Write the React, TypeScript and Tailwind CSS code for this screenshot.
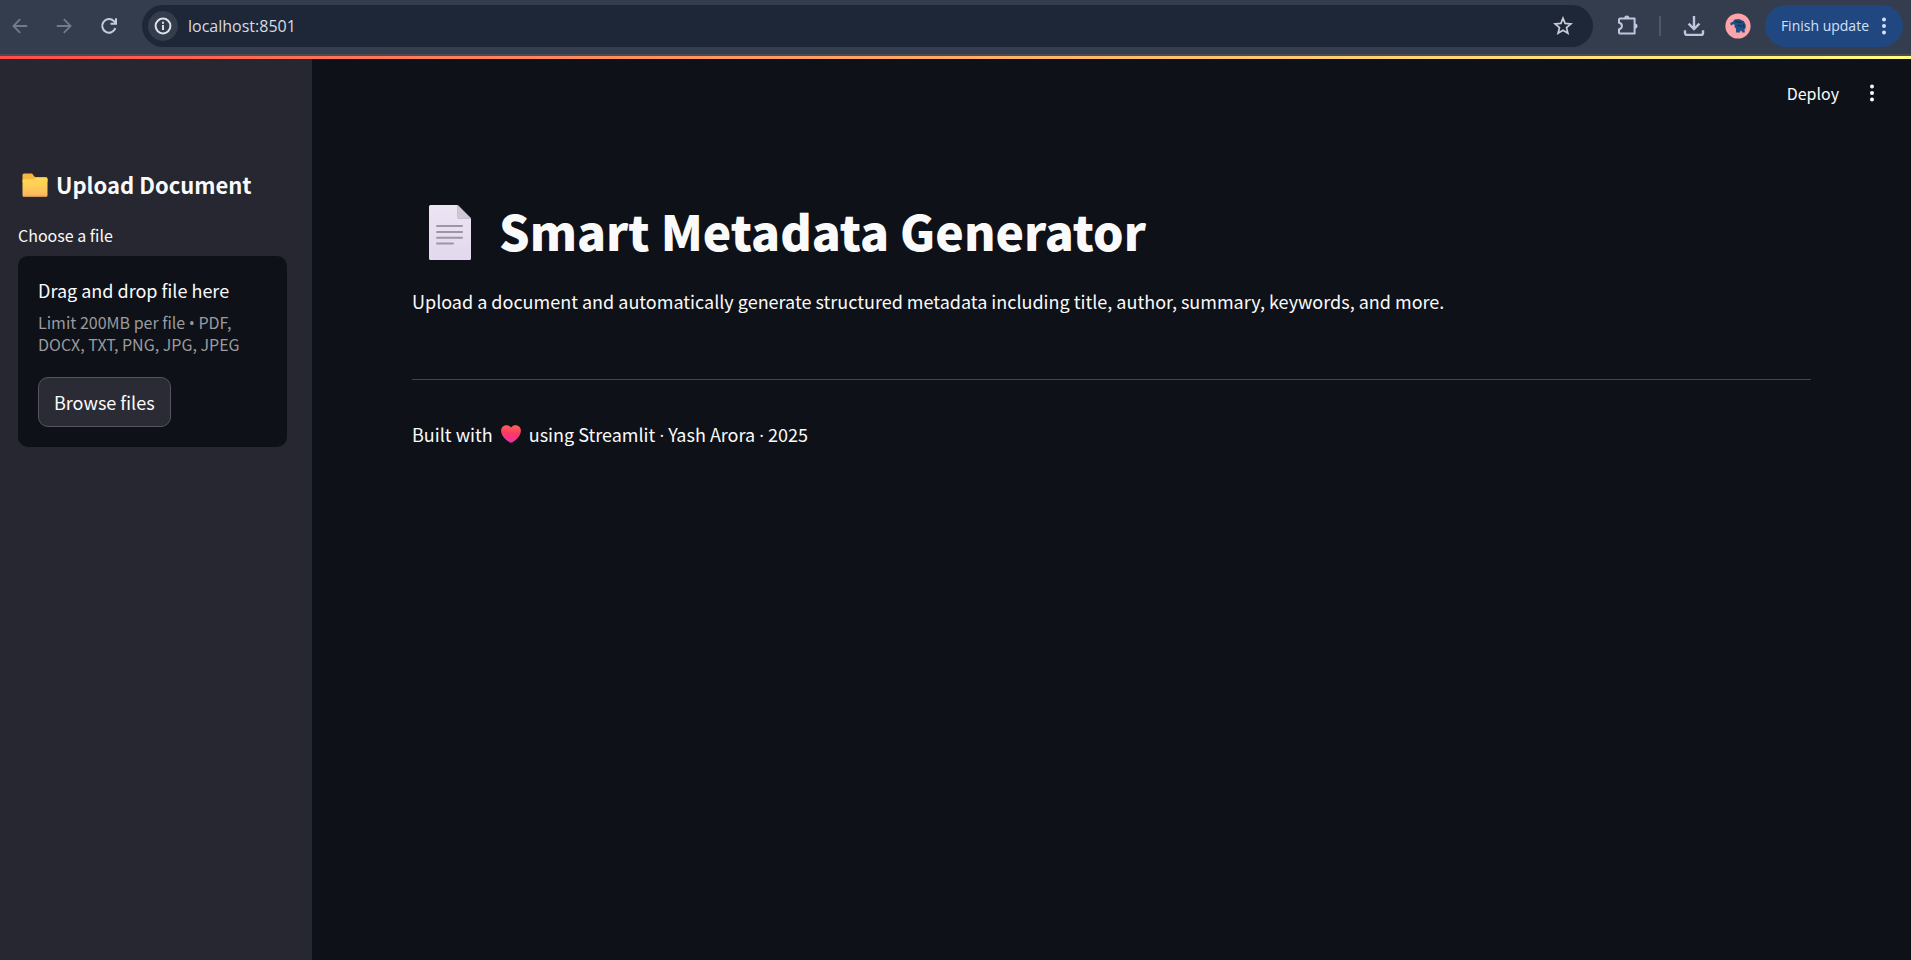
import { useRef } from "react";

const textFont = "font-['Noto_Sans_CJK_SC','Noto_Sans',sans-serif]";
const chromeFont = "font-['Open_Sans','Noto_Sans',sans-serif]";

function ArrowIcon({ className = "" }: { className?: string }) {
  return (
    <svg className={className} width="16" height="16" viewBox="0 0 16 16" fill="none" stroke="currentColor" strokeWidth="1.8" aria-hidden="true">
      <path d="M15.2 8H1.8M8.2 1.2 1.4 8l6.8 6.8" />
    </svg>
  );
}

function ReloadIcon() {
  return (
    <svg width="18" height="18" viewBox="0 0 18 18" fill="none" stroke="currentColor" strokeWidth="2" aria-hidden="true">
      <path d="M15.400 11.200A6.800 6.800 0 1 1 13.800 4l2 2" />
      <path d="M16 1.200v5.500h-5.500" />
    </svg>
  );
}

function InfoIcon() {
  return (
    <svg width="18" height="18" viewBox="0 0 18 18" fill="none" stroke="currentColor" strokeWidth="2" aria-hidden="true">
      <circle cx="9" cy="9" r="7.4" />
      <path d="M9 8v5M9 4.8v2" />
    </svg>
  );
}

function StarIcon() {
  return (
    <svg width="20" height="20" viewBox="0 0 20 20" fill="none" stroke="currentColor" strokeWidth="1.7" aria-hidden="true">
      <path d="m10 2.200 2.100 5.200 5.900.500-4.500 3.700 1.400 5.600L10 14.200l-4.900 3 1.400-5.600L2 7.900l5.900-.500z" />
    </svg>
  );
}

function PuzzleIcon() {
  return (
    <svg width="22" height="22" viewBox="0 0 22 22" aria-hidden="true">
      <path
        d="M3.4 3.4h14.2v15.2H3.2a1.2 1.2 0 0 1-1.2-1.2v-3.2c1.8-.3 2.9-1.5 2.9-3.2S3.800 8.100 2 7.800V4.600a1.200 1.200 0 0 1 1.400-1.200z"
        fill="none"
        stroke="currentColor"
        strokeWidth="2"
        strokeLinejoin="round"
      />
      <path d="M7.200 3.200a2.600 2.600 0 0 1 5.200 0zM17.900 8.400a2.600 2.600 0 0 1 0 5.200z" fill="currentColor" />
    </svg>
  );
}

function DownloadIcon() {
  return (
    <svg width="22" height="22" viewBox="0 0 22 22" fill="none" stroke="currentColor" strokeWidth="2.4" aria-hidden="true">
      <path d="M11 1v12.600M5.600 8.600l5.400 5.400 5.400-5.400" />
      <path d="M2 15.200V18a1.900 1.900 0 0 0 1.900 1.900h14.200A1.900 1.900 0 0 0 20 18v-2.800" />
    </svg>
  );
}

function Avatar() {
  return (
    <svg width="26" height="26" viewBox="0 0 26 26" aria-hidden="true">
      <circle cx="13" cy="13" r="12.600" fill="#fda4a9" />
      <path
        d="M5.300 9.700 7.600 9l1.900-2.400 4.700-.5 4.700 2.100 1.900 3.900-.3 3.400-.9.500.2 3.400h-2.600l-.8-1.700h-1l-.5 1.700h-4l.2-3.600-1.400-1.600-.3-3-1.900.3-.9 1-1.100-.8z"
        fill="#1f4f83"
      />
      <path d="m10.500 7.800 3 1.700 3.500-.4M12 13l2.700-.7 2.300 1.900M18.500 11l.6 4" stroke="#16304f" strokeWidth="1.100" fill="none" />
    </svg>
  );
}

function DotsIcon({ className = "" }: { className?: string }) {
  return (
    <svg className={className} width="6" height="20" viewBox="0 0 6 20" fill="currentColor" aria-hidden="true">
      <circle cx="3" cy="3.500" r="2" />
      <circle cx="3" cy="10" r="2" />
      <circle cx="3" cy="16.500" r="2" />
    </svg>
  );
}

function FolderIcon() {
  return (
    <svg className="mt-0.5" width="26" height="26" viewBox="0 0 26 26" role="img" aria-label="Folder">
      <defs>
        <linearGradient id="folder" x1="0" y1="0" x2="0" y2="1">
          <stop offset="0" stopColor="#ffd94f" />
          <stop offset="0.500" stopColor="#ffcc58" />
          <stop offset="1" stopColor="#fcb45f" />
        </linearGradient>
      </defs>
      <path d="M.500 3A1.500 1.500 0 0 1 2 1.500h7.500c1.500 0 2.300 3.500 4 3.500H24a1.500 1.500 0 0 1 1.500 1.500V10H.500z" fill="#f5b73f" />
      <path d="M.500 8.500a1.200 1.200 0 0 1 1.200-1.200h8.800c1.500 0 2-1.300 3.500-1.300h10a1.500 1.500 0 0 1 1.500 1.500v15.700a1.500 1.500 0 0 1-1.500 1.500H2a1.500 1.500 0 0 1-1.500-1.500z" fill="url(#folder)" />
      <path d="M1 24.200h24" stroke="#dc9a55" strokeWidth="1" />
    </svg>
  );
}

function PageIcon() {
  return (
    <svg className="mt-1" width="42" height="55" viewBox="0 0 42 55" role="img" aria-label="Document">
      <defs>
        <linearGradient id="page" x1="0" y1="0" x2="0" y2="1">
          <stop offset="0" stopColor="#ece5f3" />
          <stop offset="1" stopColor="#e3d8ee" />
        </linearGradient>
      </defs>
      <path d="M1.500 0H28.500L42 13.500v40a1.500 1.500 0 0 1-1.500 1.500h-39A1.500 1.500 0 0 1 0 53.500v-52A1.500 1.500 0 0 1 1.500 0z" fill="url(#page)" />
      <path d="M28.500 0 42 13.500H30a1.500 1.500 0 0 1-1.500-1.500z" fill="#cfc9d5" stroke="#b9b0c1" strokeWidth="0.600" />
      <path d="M8 21h25M8 27h25M8 32.700h25M8 38.500h16" stroke="#9f95a8" strokeWidth="2" strokeLinecap="round" />
    </svg>
  );
}

function HeartIcon() {
  return (
    <svg width="20" height="18" viewBox="0 0 20 18" role="img" aria-label="love">
      <defs>
        <linearGradient id="heart" x1="0.600" y1="0" x2="0.500" y2="1">
          <stop offset="0" stopColor="#ff6257" />
          <stop offset="0.450" stopColor="#fb3b60" />
          <stop offset="1" stopColor="#ee2fb0" />
        </linearGradient>
      </defs>
      <path d="M10 2.400C11.300.900 12.900.300 14.600.300c3 0 5.300 2.300 5.300 5.400 0 5-4.700 9.300-8.400 11.500-1 .600-2 .600-3 0C4.800 15 .100 10.700.100 5.700.100 2.600 2.400.300 5.400.300c1.700 0 3.300.600 4.600 2.100z" fill="url(#heart)" />
    </svg>
  );
}

function BrowserBar() {
  return (
    <header className={`flex h-14 shrink-0 items-center border-b-2 border-[#484b54] bg-[#343d4d] pt-0.5 pr-2 pb-1 pl-3 ${chromeFont}`}>
      <nav className="flex items-center gap-7 text-[#737b8b]" aria-label="Browser">
        <button type="button" aria-label="Back" className="flex">
          <ArrowIcon />
        </button>
        <button type="button" aria-label="Forward" className="flex">
          <ArrowIcon className="rotate-180" />
        </button>
        <button type="button" aria-label="Reload" className="flex text-[#c3cbe0]">
          <ReloadIcon />
        </button>
      </nav>
      <div className="ml-6 flex h-[42px] grow items-center rounded-full bg-[#1e2737] pr-5 pl-1.5">
        <button type="button" aria-label="View site information" className="flex size-[30px] items-center justify-center rounded-full bg-[#343d4d] text-[#dfe1e6]">
          <InfoIcon />
        </button>
        <input
          aria-label="Address"
          defaultValue="localhost:8501"
          className="ml-2.5 min-w-0 grow bg-transparent text-base text-[#d8dbe2] outline-none"
        />
        <button type="button" aria-label="Bookmark this page" className="flex text-[#cbced6]">
          <StarIcon />
        </button>
      </div>
      <div className="ml-6 flex items-center text-[#bdc6df]">
        <button type="button" aria-label="Extensions" className="flex">
          <PuzzleIcon />
        </button>
        <span className="ml-5 h-5 w-0.5 bg-[#505868]" />
        <button type="button" aria-label="Downloads" className="ml-[22px] flex">
          <DownloadIcon />
        </button>
        <button type="button" aria-label="Profile" className="ml-5 flex">
          <Avatar />
        </button>
        <button type="button" className="ml-3.5 flex h-[42px] items-center gap-3 rounded-full bg-[#20477f] px-4 text-sm text-[#d3e0fb]">
          Finish update
          <DotsIcon />
        </button>
      </div>
    </header>
  );
}

function Sidebar() {
  const fileInput = useRef<HTMLInputElement>(null);
  return (
    <aside className="w-[312px] shrink-0 bg-[#262730] pt-[110px] pr-[25px] pl-[18px]">
      <h2 className="flex items-center gap-2 pl-1 text-[22px] leading-[30px] font-bold whitespace-nowrap">
        <FolderIcon />
        Upload Document
      </h2>
      <label htmlFor="document" className="mt-6 block text-base leading-6">
        Choose a file
      </label>
      <section className="mt-[9px] rounded-[10px] bg-[#0e1117] p-5">
        <p className="text-lg leading-7">Drag and drop file here</p>
        <p className="mt-[7px] text-base leading-[22px] text-[#9a9b9e]">
          Limit 200MB per file <span className={`leading-none ${chromeFont}`}>•</span> PDF, DOCX, TXT, PNG, JPG, JPEG
        </p>
        <input ref={fileInput} id="document" type="file" accept=".pdf,.docx,.txt,.png,.jpg,.jpeg" className="hidden" />
        <button
          type="button"
          onClick={() => fileInput.current?.click()}
          className="mt-[22px] h-[50px] rounded-[10px] border border-[#53545c] bg-[#2b2b35] px-[15px] text-lg"
        >
          Browse files
        </button>
      </section>
    </aside>
  );
}

export default function App() {
  return (
    <div className={`flex min-h-screen flex-col bg-[#0e1117] text-[#fafafa] ${textFont}`}>
      <BrowserBar />
      <div className="h-[3px] shrink-0 bg-linear-to-r from-[#ff4b4b] to-[#fffd80]" />
      <div className="flex grow">
        <Sidebar />
        <div className="min-w-0 grow">
          <div className="flex h-[68px] items-center justify-end gap-[30px] pr-9">
            <button type="button" className="text-base">
              Deploy
            </button>
            <button type="button" aria-label="Main menu" className="flex">
              <DotsIcon />
            </button>
          </div>
          <main className="px-[100px] pt-[70px]">
            <h1 className="flex items-center gap-7 pl-[17px] text-5xl leading-[66px] font-black">
              <PageIcon />
              Smart Metadata Generator
            </h1>
            <p className="mt-[23px] text-lg leading-[30px]">
              Upload a document and automatically generate structured metadata including title, author, summary, keywords, and more.
            </p>
            <hr className="mt-[63px] border-[#444547]" />
            <p className="mt-[39px] flex items-center text-lg leading-[30px]">
              Built with
              <span className="mx-2 flex">
                <HeartIcon />
              </span>
              <span>
                using Streamlit <span className={`leading-none ${chromeFont}`}>·</span> Yash Arora{" "}
                <span className={`leading-none ${chromeFont}`}>·</span> 2025
              </span>
            </p>
          </main>
        </div>
      </div>
    </div>
  );
}
